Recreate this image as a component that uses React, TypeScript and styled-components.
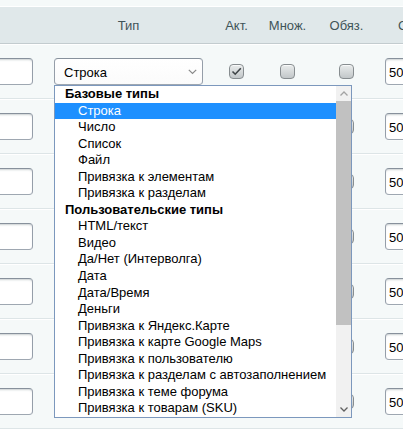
import React from "react"
import styled, { createGlobalStyle } from "styled-components"

type ListItem = {
    label: string
    group?: boolean
    selected?: boolean
}

const items: ListItem[] = [
    { label: "Базовые типы", group: true },
    { label: "Строка", selected: true },
    { label: "Число" },
    { label: "Список" },
    { label: "Файл" },
    { label: "Привязка к элементам" },
    { label: "Привязка к разделам" },
    { label: "Пользовательские типы", group: true },
    { label: "HTML/текст" },
    { label: "Видео" },
    { label: "Да/Нет (Интерволга)" },
    { label: "Дата" },
    { label: "Дата/Время" },
    { label: "Деньги" },
    { label: "Привязка к Яндекс.Карте" },
    { label: "Привязка к карте Google Maps" },
    { label: "Привязка к пользователю" },
    { label: "Привязка к разделам с автозаполнением" },
    { label: "Привязка к теме форума" },
    { label: "Привязка к товарам (SKU)" },
]

const ROW_COUNT = 8

export default function App() {
    return (
        <>
            <GlobalStyle />
            <Page>
                <Header>
                    <HeadCell />
                    <HeadCell>Тип</HeadCell>
                    <HeadCell>Акт.</HeadCell>
                    <HeadCell>Множ.</HeadCell>
                    <HeadCell>Обяз.</HeadCell>
                    <HeadCell $left>Сорт.</HeadCell>
                </Header>
                {Array.from({ length: ROW_COUNT }).map((_, i) => (
                    <Row key={i}>
                        <NameCell>
                            <TextInput />
                        </NameCell>
                        <Cell>
                            <SelectWrap>
                                {i === 0 && (
                                    <Select>
                                        <span>Строка</span>
                                        <Chevron />
                                    </Select>
                                )}
                                {i === 0 && <Dropdown />}
                            </SelectWrap>
                        </Cell>
                        <Cell>
                            <Checkbox>{i === 0 && <CheckMark />}</Checkbox>
                        </Cell>
                        <Cell>
                            <Checkbox />
                        </Cell>
                        <Cell>
                            <Checkbox />
                        </Cell>
                        <SortCell>
                            <SortInput>{i < ROW_COUNT - 1 ? "50" : ""}</SortInput>
                        </SortCell>
                    </Row>
                ))}
            </Page>
        </>
    )
}

const Dropdown = () => (
    <ListBox>
        <Options>
            {items.map((item) => (
                <Option key={item.label} $group={item.group} $selected={item.selected}>
                    {item.label}
                </Option>
            ))}
        </Options>
        <ScrollBar>
            <ScrollButton>
                <svg width="8" height="5" viewBox="0 0 8 5">
                    <path d="M0.5 4.5 L4 1 L7.5 4.5" fill="none" stroke="#a3a3a3" strokeWidth="1.3" />
                </svg>
            </ScrollButton>
            <Track>
                <Thumb />
            </Track>
            <ScrollButton>
                <svg width="8" height="5" viewBox="0 0 8 5">
                    <path d="M0.5 0.5 L4 4 L7.5 0.5" fill="none" stroke="#606060" strokeWidth="1.3" />
                </svg>
            </ScrollButton>
        </ScrollBar>
    </ListBox>
)

const Chevron = () => (
    <svg width="9" height="6" viewBox="0 0 9 6">
        <path d="M0.8 0.8 L4.5 4.5 L8.2 0.8" fill="none" stroke="#8a8a8a" strokeWidth="1.2" />
    </svg>
)

const CheckMark = () => (
    <svg width="11" height="9" viewBox="0 0 11 9">
        <path d="M1.5 4.5 L4.2 7.2 L9.8 1.2" fill="none" stroke="#3e4447" strokeWidth="1.6" />
    </svg>
)

const GlobalStyle = createGlobalStyle`
    body {
        margin: 0;
        background: #f5f9f9;
        font-family: "Liberation Sans", Arial, sans-serif;
        font-size: 13px;
        overflow: hidden;
    }
`

const Page = styled.div`
    padding-top: 6px;
    background: #f5f9f9;
    width: 403px;
    height: 429px;
    box-sizing: border-box;
    overflow: hidden;
`

const columns = "44px 169px 47px 55px 63px 1fr"

const Header = styled.div`
    display: grid;
    grid-template-columns: ${columns};
    height: 36px;
    align-items: center;
    background: #e0e8ea;
    border-top: 1px solid #ffffff;
    border-bottom: 1px solid #c3cccf;
    color: #3f5458;
    white-space: nowrap;
    overflow: hidden;
`

const HeadCell = styled.div<{ $left?: boolean }>`
    text-align: ${({ $left }) => ($left ? "left" : "center")};
    padding: 1px 0 0 ${({ $left }) => ($left ? "20px" : "0")};
`

const Row = styled.div`
    display: grid;
    grid-template-columns: ${columns};
    height: 53px;
    align-items: center;
    border-bottom: 1px solid #dde5e7;
    box-shadow: inset 0 1px 0 #ffffff;
    padding-top: 1px;
    box-sizing: content-box;
`

const Cell = styled.div`
    display: flex;
    justify-content: center;
    align-items: center;
    position: relative;
`

const NameCell = styled.div`
    display: flex;
    justify-content: flex-end;
    padding-right: 11px;
    overflow: hidden;
`

const SortCell = styled.div`
    display: flex;
    padding-left: 7px;
`

const fieldBorder = `
    border: 1px solid;
    border-color: #87919c #959ea9 #9ea7b1 #959ea9;
    border-radius: 4px;
    box-shadow: 0 1px 0 0 rgba(255, 255, 255, 0.3), inset 0 2px 2px -1px rgba(180, 188, 191, 0.7);
    background: #ffffff;
    box-sizing: border-box;
    height: 27px;
`

const TextInput = styled.div`
    ${fieldBorder}
    flex: none;
    width: 140px;
`

const SelectWrap = styled.div`
    position: relative;
    width: 149px;
    height: 27px;
`

const Select = styled.div`
    ${fieldBorder}
    display: flex;
    align-items: center;
    justify-content: space-between;
    padding: 1px 5px 0 9px;
    color: #000000;
    box-shadow: none;
    background: linear-gradient(#ffffff, #fbfbfb);
`

const ListBox = styled.div`
    position: absolute;
    top: 100%;
    left: 0;
    z-index: 10;
    width: 298px;
    height: 333px;
    box-sizing: border-box;
    border: 1px solid #7c98bd;
    background: #ffffff;
    display: flex;
`

const Options = styled.div`
    flex: 1;
    overflow: hidden;
    color: #000000;
`

const Option = styled.div<{ $group?: boolean; $selected?: boolean }>`
    height: 16.55px;
    line-height: 16.55px;
    white-space: nowrap;
    padding-left: ${({ $group }) => ($group ? "10px" : "23px")};
    font-weight: ${({ $group }) => ($group ? "bold" : "normal")};
    background: ${({ $selected }) => ($selected ? "#1e90ff" : "transparent")};
    color: ${({ $selected }) => ($selected ? "#ffffff" : "#000000")};
`

const ScrollBar = styled.div`
    width: 15px;
    display: flex;
    flex-direction: column;
    background: #f1f1f1;
`

const ScrollButton = styled.div`
    height: 15px;
    display: flex;
    align-items: center;
    justify-content: center;
`

const Track = styled.div`
    flex: 1;
    display: flex;
    flex-direction: column;
`

const Thumb = styled.div`
    height: 224px;
    background: #c1c1c1;
`

const Checkbox = styled.div`
    width: 15px;
    height: 15px;
    box-sizing: border-box;
    border: 1px solid #878d90;
    border-radius: 4px;
    background: linear-gradient(#e9ecec, #c2c7c9);
    box-shadow: inset 0 1px 0 rgba(255, 255, 255, 0.7);
    display: flex;
    align-items: center;
    justify-content: center;
`

const SortInput = styled.div`
    ${fieldBorder}
    width: 60px;
    display: flex;
    align-items: center;
    padding: 1px 0 0 3px;
    color: #000000;
`
